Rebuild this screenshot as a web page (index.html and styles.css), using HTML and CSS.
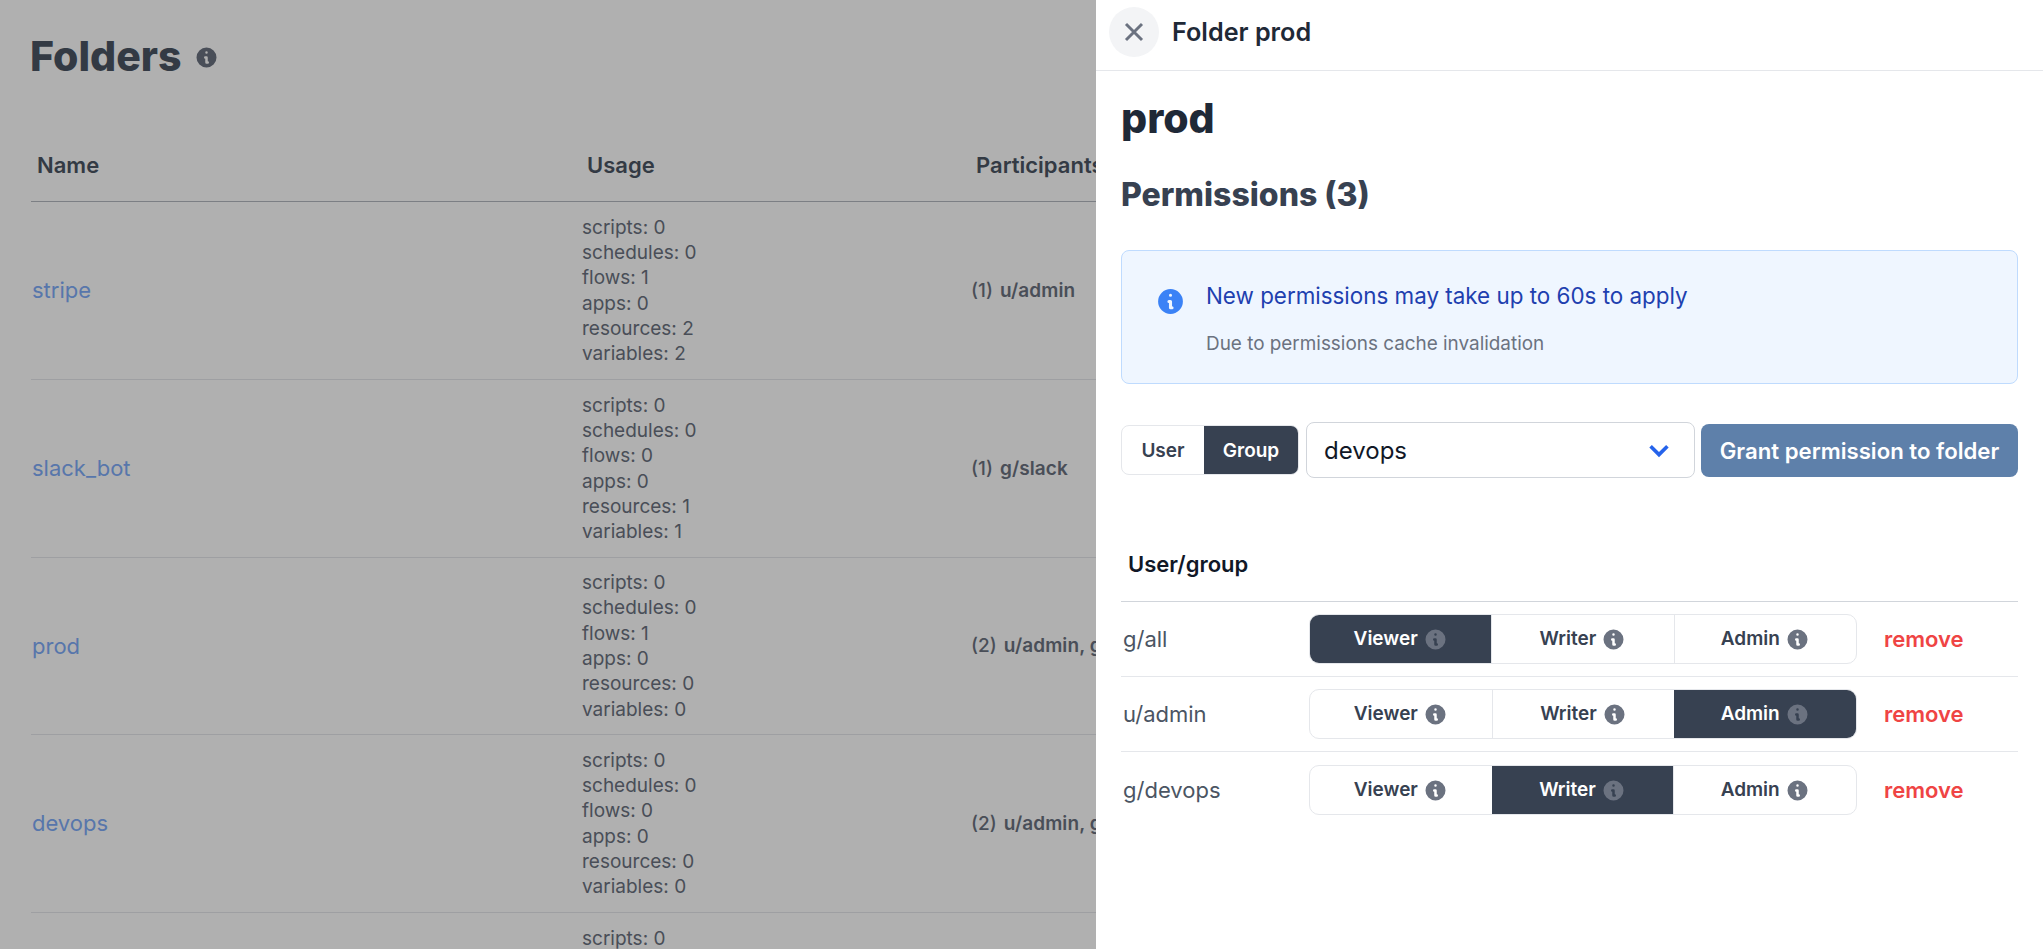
FILE: index.html
```html
<!DOCTYPE html>
<html lang="en">
<head>
    <meta charset="UTF-8">
    <title>Folders</title>
    <link rel="stylesheet" href="styles.css">
</head>
<body>
    <svg class="sprite" aria-hidden="true">
        <symbol id="info" viewBox="0 0 20 20">
            <path fill="currentColor" fill-rule="evenodd" d="M18 10a8 8 0 11-16 0 8 8 0 0116 0zm-7-4a1 1 0 11-2 0 1 1 0 012 0zM9 9a1 1 0 000 2v3a1 1 0 001 1h1a1 1 0 100-2v-3a1 1 0 00-1-1H9z"/>
        </symbol>
    </svg>

    <main class="page">
        <div class="page-title">
            <h1>Folders</h1>
            <svg class="info page-info"><use href="#info"/></svg>
        </div>

        <table class="folders">
            <thead>
                <tr>
                    <th class="col-name">Name</th>
                    <th class="col-usage">Usage</th>
                    <th>Participants</th>
                </tr>
            </thead>
            <tbody>
                <tr>
                    <td><a href="#">stripe</a></td>
                    <td class="usage">scripts: 0<br>schedules: 0<br>flows: 1<br>apps: 0<br>resources: 2<br>variables: 2</td>
                    <td class="people">(1) <b>u/admin</b></td>
                </tr>
                <tr>
                    <td><a href="#">slack_bot</a></td>
                    <td class="usage">scripts: 0<br>schedules: 0<br>flows: 0<br>apps: 0<br>resources: 1<br>variables: 1</td>
                    <td class="people">(1) <b>g/slack</b></td>
                </tr>
                <tr class="short-row">
                    <td><a href="#">prod</a></td>
                    <td class="usage">scripts: 0<br>schedules: 0<br>flows: 1<br>apps: 0<br>resources: 0<br>variables: 0</td>
                    <td class="people">(2) <b>u/admin, g/devops</b></td>
                </tr>
                <tr>
                    <td><a href="#">devops</a></td>
                    <td class="usage">scripts: 0<br>schedules: 0<br>flows: 0<br>apps: 0<br>resources: 0<br>variables: 0</td>
                    <td class="people">(2) <b>u/admin, g/devops</b></td>
                </tr>
                <tr class="cut-row">
                    <td></td>
                    <td class="usage">scripts: 0</td>
                    <td class="people"></td>
                </tr>
            </tbody>
        </table>
    </main>

    <div class="backdrop"></div>

    <aside class="drawer">
        <header class="drawer-head">
            <button class="close" aria-label="Close">
                <svg viewBox="0 0 24 24"><path d="M6 6l12 12M18 6L6 18"/></svg>
            </button>
            <span class="drawer-title">Folder prod</span>
        </header>

        <div class="drawer-body">
            <h1 class="folder-name">prod</h1>
            <h2 class="perm-title">Permissions (3)</h2>

            <div class="alert">
                <svg class="alert-icon"><use href="#info"/></svg>
                <div>
                    <div class="alert-title">New permissions may take up to 60s to apply</div>
                    <div class="alert-text">Due to permissions cache invalidation</div>
                </div>
            </div>

            <div class="grant">
                <div class="kind">
                    <button class="kind-btn user-btn">User</button>
                    <button class="kind-btn group-btn active">Group</button>
                </div>
                <div class="select">
                    <span>devops</span>
                    <svg viewBox="0 0 20 20"><path d="M3 6l7 7 7-7"/></svg>
                </div>
                <button class="grant-btn">Grant permission to folder</button>
            </div>

            <div class="perm-head">User/group</div>

            <div class="perm-row">
                <span class="perm-name">g/all</span>
                <div class="toggle">
                    <button class="active">Viewer <svg class="info"><use href="#info"/></svg></button>
                    <button>Writer <svg class="info"><use href="#info"/></svg></button>
                    <button>Admin <svg class="info"><use href="#info"/></svg></button>
                </div>
                <a class="remove" href="#">remove</a>
            </div>
            <div class="perm-row">
                <span class="perm-name">u/admin</span>
                <div class="toggle">
                    <button>Viewer <svg class="info"><use href="#info"/></svg></button>
                    <button>Writer <svg class="info"><use href="#info"/></svg></button>
                    <button class="active">Admin <svg class="info"><use href="#info"/></svg></button>
                </div>
                <a class="remove" href="#">remove</a>
            </div>
            <div class="perm-row">
                <span class="perm-name">g/devops</span>
                <div class="toggle">
                    <button>Viewer <svg class="info"><use href="#info"/></svg></button>
                    <button class="active">Writer <svg class="info"><use href="#info"/></svg></button>
                    <button>Admin <svg class="info"><use href="#info"/></svg></button>
                </div>
                <a class="remove" href="#">remove</a>
            </div>
        </div>
    </aside>
</body>
</html>
```

FILE: styles.css
```css
* {
    box-sizing: border-box;
}

html, body {
    height: 100%;
    margin: 0;
    overflow: hidden;
}

body {
    font-family: Inter, "Liberation Sans", sans-serif;
    background: white;
    color: #374151;
}

button {
    font-family: inherit;
    border: 0;
    background: none;
    cursor: pointer;
}

.sprite {
    display: none;
}

/* page behind the drawer */
.page {
    height: 100%;
    overflow: hidden;
    padding: 36px 0 0 30px;
}

.page-title {
    display: flex;
    align-items: center;
    height: 40px;
}

.page-title h1 {
    margin: 0;
    font-size: 41px;
    font-weight: 800;
    color: #4b5563;
}

.page-info {
    margin-left: 12px;
    margin-top: 3px;
    color: #6b7280;
}

.info {
    width: 25px;
    height: 25px;
    color: #6b7280;
    flex: none;
}

.folders {
    margin-top: 54px;
    margin-left: 1px;
    width: 1500px;
    table-layout: fixed;
    border-collapse: collapse;
}

.folders th {
    height: 71px;
    padding: 0 0 0 6px;
    text-align: left;
    font-size: 22px;
    font-weight: 600;
    color: #4b5563;
    border-bottom: 1px solid #b4b8bf;
}

.folders th.col-name {
    width: 551px;
    padding-left: 6px;
}

.folders th.col-usage {
    width: 388px;
    padding-left: 5px;
}

.folders td {
    height: 178px;
    padding: 0 0 0 1px;
    border-bottom: 1px solid #e5e7eb;
    font-size: 22px;
}

.folders .short-row td {
    height: 177px;
}

.folders a {
    color: #7facf8;
    text-decoration: none;
}

.folders td.usage {
    font-size: 19px;
    line-height: 25.3px;
    color: #6b7280;
    padding: 1px 0 0;
}

.folders td.people {
    font-size: 19px;
    color: #6b7280;
    font-weight: 500;
}

.folders td.people b {
    margin-left: 2px;
    font-weight: 600;
    letter-spacing: 0.1px;
}

.folders .cut-row td {
    vertical-align: top;
    padding-top: 13px;
}

.backdrop {
    position: fixed;
    inset: 0;
    background: rgba(0, 0, 0, 0.31);
}

/* drawer */
.drawer {
    position: fixed;
    top: 0;
    right: 0;
    bottom: 0;
    width: 947px;
    background: white;
}

.drawer-head {
    display: flex;
    align-items: center;
    gap: 13px;
    height: 71px;
    padding: 0 13px 7px;
    border-bottom: 1px solid #e5e7eb;
}

.close {
    display: flex;
    align-items: center;
    justify-content: center;
    width: 50px;
    height: 50px;
    padding: 0;
    border-radius: 50%;
    background: #f3f4f6;
}

.close svg {
    width: 32px;
    height: 32px;
    fill: none;
    stroke: #6b7280;
    stroke-width: 2.2;
}

.drawer-title {
    font-size: 25.2px;
    font-weight: 600;
    color: #1f2937;
}

.drawer-body {
    padding: 0 25px;
}

.folder-name {
    margin: 23px 0 0;
    font-size: 41px;
    line-height: 48px;
    font-weight: 800;
    color: #1f2937;
}

.perm-title {
    margin: 33px 0 0;
    font-size: 32px;
    line-height: 40px;
    font-weight: 800;
    color: #374151;
}

.alert {
    display: flex;
    margin-top: 35px;
    height: 134px;
    padding: 29px 36px 0;
    gap: 20px;
    background: #eff6ff;
    border: 1px solid #bfdbfe;
    border-radius: 8px;
}

.alert-icon {
    width: 31px;
    height: 31px;
    margin: 6px 0 0 -3px;
    color: #3b82f6;
    flex: none;
}

.alert-title {
    font-size: 22.4px;
    line-height: 32px;
    font-weight: 400;
    color: #1e40af;
}

.alert-text {
    margin-top: 18px;
    font-size: 18.9px;
    line-height: 28px;
    color: #6b7280;
}

.grant {
    display: flex;
    align-items: center;
    margin-top: 38px;
    height: 56px;
}

.kind {
    display: flex;
    width: 178px;
    height: 50px;
    border: 1px solid #e5e7eb;
    border-radius: 8px;
    overflow: hidden;
}

.kind-btn {
    font-size: 19px;
    font-weight: 600;
    color: #374151;
    padding: 0;
}

.user-btn {
    width: 82px;
}

.group-btn {
    flex: 1;
}

.kind-btn.active {
    background: #374151;
    color: white;
}

.select {
    display: flex;
    align-items: center;
    justify-content: space-between;
    width: 389px;
    height: 56px;
    margin-left: 7px;
    padding: 0 23px 0 17px;
    border: 1px solid #d1d5db;
    border-radius: 8px;
    font-size: 24px;
    color: #111827;
}

.select svg {
    width: 24px;
    height: 24px;
    margin-top: 2px;
    fill: none;
    stroke: #2563eb;
    stroke-width: 3;
}

.grant-btn {
    width: 317px;
    height: 53px;
    margin-left: 6px;
    padding: 1px 0 0;
    border-radius: 8px;
    background: #5e80aa;
    color: white;
    font-size: 22.2px;
    font-weight: 600;
}

.perm-head {
    display: flex;
    align-items: center;
    height: 78px;
    margin-top: 46px;
    padding: 2px 0 0 7px;
    border-bottom: 1px solid #d1d5db;
    font-size: 22px;
    font-weight: 600;
    color: #111827;
}

.perm-row {
    display: flex;
    align-items: center;
    height: 75px;
    padding-left: 2px;
    border-bottom: 1px solid #e5e7eb;
}

.perm-row:last-child {
    border-bottom: 0;
}

.perm-name {
    width: 186px;
    font-size: 22px;
    color: #4b5563;
}

.toggle {
    display: flex;
    width: 548px;
    height: 50px;
    border: 1px solid #e5e7eb;
    border-radius: 10px;
    overflow: hidden;
}

.toggle button {
    display: flex;
    align-items: center;
    justify-content: center;
    gap: 5px;
    flex: 1;
    padding: 0 0 1px;
    font-size: 19px;
    font-weight: 600;
    color: #374151;
    border-left: 1px solid #e5e7eb;
}

.toggle .info {
    margin-top: 2px;
}

.toggle button:first-child {
    border-left: 0;
}

.toggle button.active {
    background: #374151;
    color: white;
    border-left: 0;
}

.remove {
    margin-left: 27px;
    font-size: 22px;
    font-weight: 600;
    color: #ef4444;
    text-decoration: none;
}
```
